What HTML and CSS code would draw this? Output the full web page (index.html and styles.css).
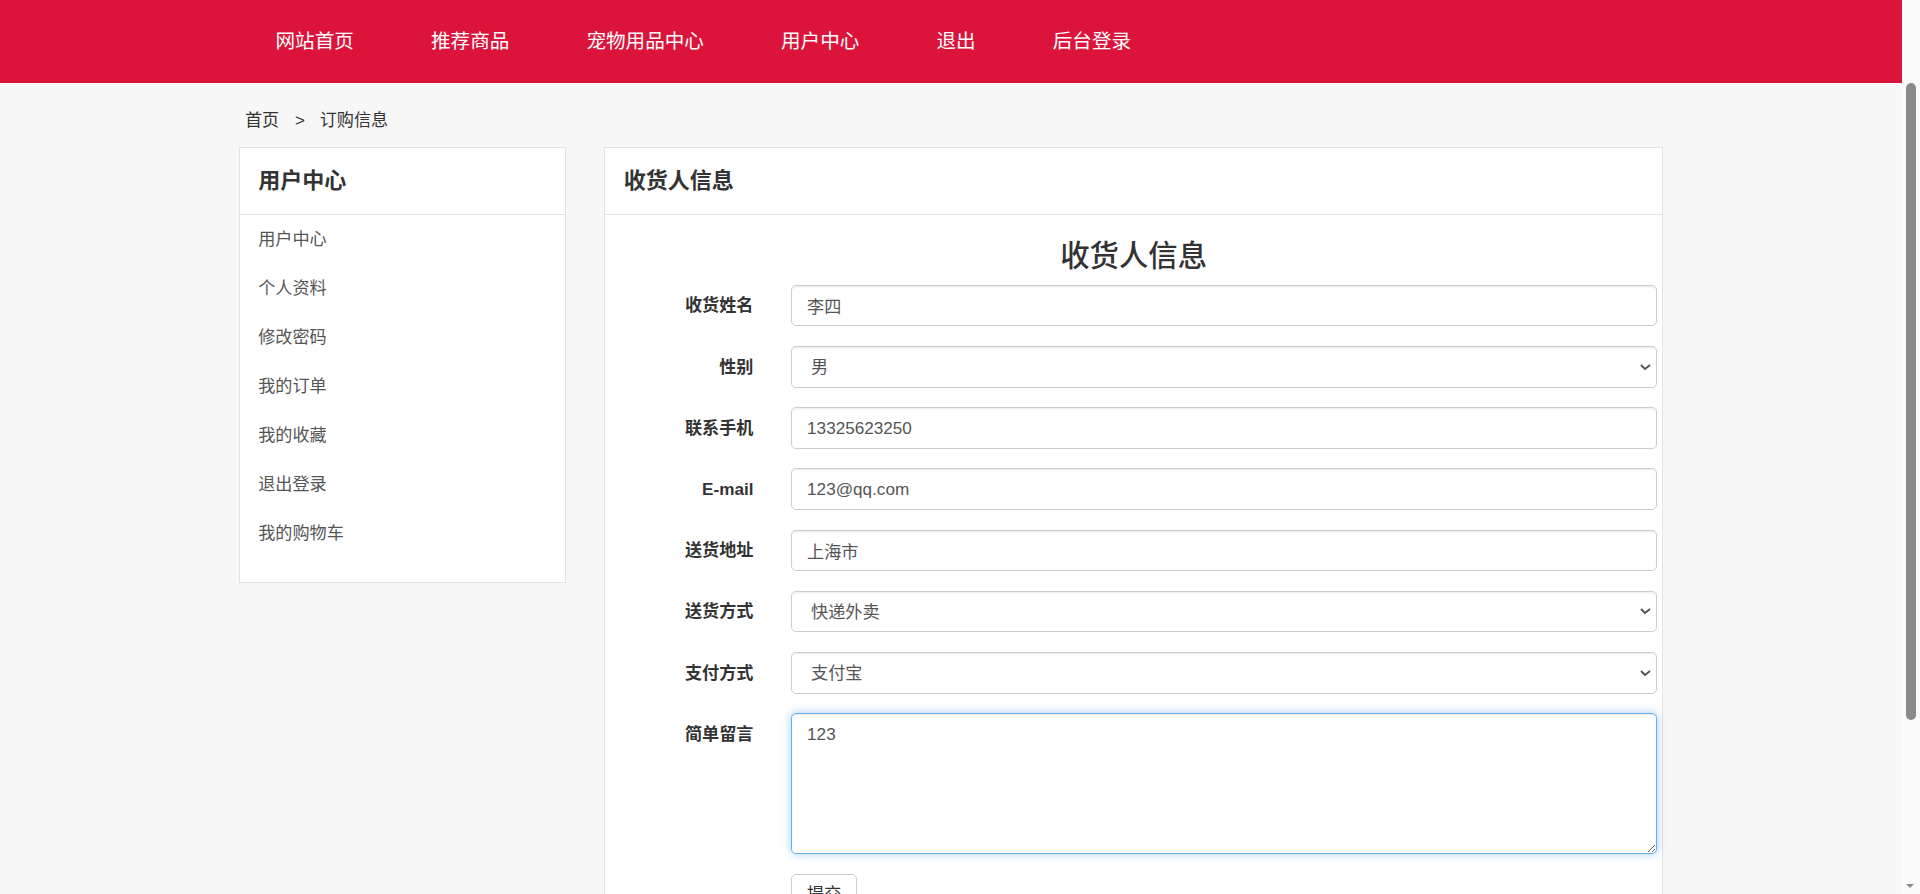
FILE: index.html
```html
<!DOCTYPE html>
<html lang="zh-CN">
<head>
<meta charset="utf-8">
<title>订购信息</title>
<link rel="stylesheet" href="styles.css">
</head>
<body>
<header class="topnav">
  <nav class="container nav-inner">
    <a class="nav-link" href="#">网站首页</a>
    <a class="nav-link" href="#">推荐商品</a>
    <a class="nav-link" href="#">宠物用品中心</a>
    <a class="nav-link" href="#">用户中心</a>
    <a class="nav-link" href="#">退出</a>
    <a class="nav-link" href="#">后台登录</a>
  </nav>
</header>

<div class="page">
  <div class="container">
    <div class="breadcrumb">
      <a href="#">首页</a><span class="sep">&gt;</span><span>订购信息</span>
    </div>

    <div class="layout">
      <aside class="panel side">
        <div class="panel-head">用户中心</div>
        <ul class="side-menu">
          <li><a href="#">用户中心</a></li>
          <li><a href="#">个人资料</a></li>
          <li><a href="#">修改密码</a></li>
          <li><a href="#">我的订单</a></li>
          <li><a href="#">我的收藏</a></li>
          <li><a href="#">退出登录</a></li>
          <li><a href="#">我的购物车</a></li>
        </ul>
      </aside>

      <main class="panel main">
        <div class="panel-head">收货人信息</div>
        <div class="panel-body">
          <h3 class="form-title">收货人信息</h3>
          <form class="order-form">
            <div class="form-row">
              <label class="form-label">收货姓名</label>
              <input class="form-control" type="text" value="李四">
            </div>
            <div class="form-row">
              <label class="form-label">性别</label>
              <select class="form-control">
                <option>男</option>
                <option>女</option>
              </select>
            </div>
            <div class="form-row">
              <label class="form-label">联系手机</label>
              <input class="form-control" type="text" value="13325623250">
            </div>
            <div class="form-row">
              <label class="form-label">E-mail</label>
              <input class="form-control" type="text" value="123@qq.com">
            </div>
            <div class="form-row">
              <label class="form-label">送货地址</label>
              <input class="form-control" type="text" value="上海市">
            </div>
            <div class="form-row">
              <label class="form-label">送货方式</label>
              <select class="form-control">
                <option>快递外卖</option>
              </select>
            </div>
            <div class="form-row">
              <label class="form-label">支付方式</label>
              <select class="form-control">
                <option>支付宝</option>
              </select>
            </div>
            <div class="form-row">
              <label class="form-label">简单留言</label>
              <textarea class="form-control textarea focused">123</textarea>
            </div>
            <div class="form-row">
              <span></span>
              <div><button class="btn" type="button">提交</button></div>
            </div>
          </form>
        </div>
      </main>
    </div>
  </div>
</div>

<div class="fake-scrollbar" aria-hidden="true">
  <div class="fake-thumb"></div>
  <div class="fake-arrow"></div>
</div>
</body>
</html>
```

FILE: styles.css
```css
html {
  zoom: 1.2245;
}

body {
  margin: 0;
  padding-right: 15px;
  background: #f7f7f7;
  font-family: "Liberation Sans", "Noto Sans CJK SC", sans-serif;
  font-size: 14px;
  line-height: 20px;
  color: #333;
}

a {
  text-decoration: none;
  color: inherit;
}

.container {
  width: 1163px;
  margin: 0 auto;
}

/* top navigation */
.topnav {
  background: #dc143c;
  height: 68px;
}
.nav-inner {
  display: flex;
  height: 68px;
  align-items: center;
}
.nav-link {
  color: #fff;
  font-size: 16px;
  line-height: 68px;
  padding: 0 31.5px;
}
.nav-link:first-child {
  padding-left: 30px;
}

/* page */
.page {
  padding-bottom: 40px;
}

.breadcrumb {
  padding: 20px 5px 12px;
  color: #333;
}
.breadcrumb .sep {
  margin: 0 12px 0 13px;
}

.layout {
  display: grid;
  grid-template-columns: 267px 1fr;
  column-gap: 31.5px;
  align-items: start;
}

.panel {
  background: #fff;
  border: 1px solid #e2e2e2;
}
.panel-head {
  padding: 15px 15px;
  line-height: 24px;
  font-size: 18px;
  font-weight: bold;
  color: #333;
  border-bottom: 1px solid #e2e2e2;
}

/* sidebar */
.side-menu {
  list-style: none;
  margin: 0;
  padding: 0 0 20px;
}
.side-menu li {
  padding: 10px 15px;
  line-height: 20px;
}
.side-menu a {
  color: #555;
}

/* main form */
.panel-body {
  padding: 20px 0 15px;
}
.form-title {
  margin: 0 0 11px;
  text-align: center;
  font-size: 24px;
  line-height: 26px;
  font-weight: 500;
  color: #333;
}
.order-form {
  padding: 0 4px 0 15px;
}

.form-row {
  display: grid;
  grid-template-columns: 106px 1fr;
  column-gap: 31px;
  margin-bottom: 16px;
}
.form-label {
  text-align: right;
  font-weight: bold;
  padding-top: 7px;
  line-height: 20px;
  color: #333;
}

.form-control {
  display: block;
  box-sizing: border-box;
  width: 100%;
  height: 34px;
  padding: 6px 12px;
  font-family: inherit;
  font-size: 14px;
  line-height: 20px;
  color: #555;
  background: #fff;
  border: 1px solid #ccc;
  border-radius: 4px;
  box-shadow: inset 0 1px 1px rgba(0, 0, 0, 0.075);
  margin: 0;
}
.textarea {
  height: 115px;
  resize: vertical;
}
.focused {
  border-color: #66afe9;
  outline: 0;
  box-shadow: inset 0 1px 1px rgba(0, 0, 0, 0.075), 0 0 8px rgba(102, 175, 233, 0.6);
}

.btn {
  display: inline-block;
  padding: 6px 12px;
  font-family: inherit;
  font-size: 14px;
  line-height: 20px;
  color: #333;
  background: #fff;
  border: 1px solid #ccc;
  border-radius: 4px;
}

/* decorative page scrollbar (overlay on the right edge) */
.fake-scrollbar {
  position: fixed;
  top: 0;
  bottom: 0;
  right: 0;
  width: 15px;
  background: #fafafa;
}
.fake-thumb {
  position: absolute;
  top: 68px;
  left: 3.5px;
  width: 8.5px;
  height: 520px;
  background: #8a8a8a;
  border-radius: 5px;
}
.fake-arrow {
  position: absolute;
  bottom: 5px;
  left: 3.5px;
  width: 0;
  height: 0;
  border-left: 4px solid transparent;
  border-right: 4px solid transparent;
  border-top: 4px solid #8a8a8a;
}
```
